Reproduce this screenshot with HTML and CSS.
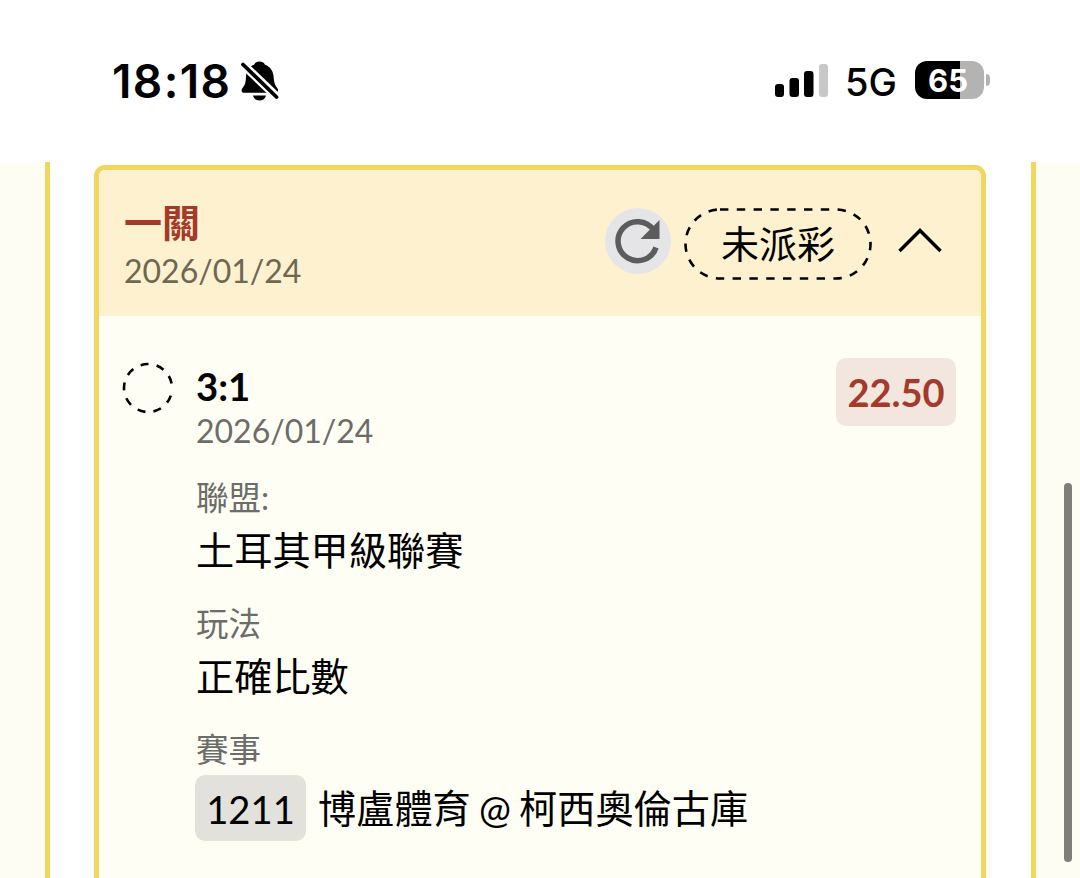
FILE: index.html
```html
<!DOCTYPE html>
<html lang="zh-Hant">
  <head>
    <meta charset="UTF-8" />
    <title>投注紀錄</title>
    <link rel="stylesheet" href="styles.css">
  </head>
  <body>
    <div class="status-bar">
      <span class="time">18:18</span>
      <svg class="bell" width="38" height="42" viewBox="0 0 38 42">
        <path d="M18.500 1.500c2.500 0 4.500 1.200 5.500 3.200 5.200 2 8 6 8.500 11 .5 7 1.300 9 3.500 12 2 2.500 1 5-1.500 5h-31C.7 32.700-.3 30.500 1.500 28c2.500-3 3.300-5.500 3.600-12.300.3-5 2.700-9 7.900-11 1-2 3-3.200 5.500-3.200z" />
        <path d="M12 35.500h13c-.8 3-3 5-6.500 5s-5.700-2-6.500-5z" />
        <path class="bell-gap" d="M1 3.500L37 38" />
        <path class="bell-slash" d="M2 4.500L35.500 37" />
      </svg>
      <svg class="signal" width="54" height="34" viewBox="0 0 54 34">
        <rect x="0" y="20" width="9" height="13" rx="3" />
        <rect x="14.500" y="14" width="9.500" height="19" rx="3" />
        <rect x="29" y="7" width="9.500" height="26" rx="3" />
        <rect class="off" x="44" y="0" width="9" height="33" rx="3" />
      </svg>
      <span class="network">5G</span>
      <span class="battery">65</span>
      <span class="battery-tip"></span>
    </div>

    <div class="page">
      <div class="panel">
        <div class="card">
          <div class="card-header">
            <div class="card-title">
              <h3>一關</h3>
              <p class="date">2026/01/24</p>
            </div>
            <button class="refresh">
              <svg width="66" height="66" viewBox="0 0 66 66">
                <path class="arc" d="M48.500 22A19.500 19.500 0 1 0 51 39.500" />
                <path d="M54.500 12v19H35.500z" />
              </svg>
            </button>
            <span class="status">
              <svg width="188" height="72" viewBox="0 0 188 72">
                <rect x="1.500" y="1.500" width="185" height="69" rx="34.500" />
              </svg>
              未派彩
            </span>
            <svg class="chevron" width="44" height="26" viewBox="0 0 44 26">
              <path d="M1.500 24L22 3.500 42.500 24" />
            </svg>
          </div>

          <div class="bet">
            <svg class="pending" width="52" height="52" viewBox="0 0 52 52">
              <circle cx="26" cy="26" r="24" />
            </svg>
            <div class="bet-info">
              <h4>3:1</h4>
              <p class="date">2026/01/24</p>
              <dl>
                <dt>聯盟:</dt>
                <dd>土耳其甲級聯賽</dd>
                <dt>玩法</dt>
                <dd>正確比數</dd>
                <dt>賽事</dt>
                <dd class="match"><span class="match-no">1211</span>博盧體育 @ 柯西奧倫古庫</dd>
              </dl>
            </div>
            <span class="odds">22.50</span>
          </div>
        </div>
      </div>
      <div class="scrollbar"></div>
    </div>
  </body>
</html>
```
FILE: styles.css
```css
* {
  box-sizing: border-box;
}

body {
  margin: 0;
  height: 878px;
  overflow: hidden;
  background: #fff;
  color: #000;
  font-family: Lato, "Noto Sans CJK TC", sans-serif;
}

h3,
h4,
p,
dl,
dd {
  margin: 0;
}

/* Status bar */
.status-bar {
  display: flex;
  align-items: center;
  height: 162px;
  padding: 0 90px 0 112px;
  font-family: Inter, sans-serif;
}

.time {
  width: 118px;
  font-size: 46px;
  font-weight: 600;
  letter-spacing: 1.4px;
  line-height: 50px;
  white-space: nowrap;
}

.bell {
  margin-left: 11px;
}

.bell-gap {
  stroke: #fff;
  stroke-width: 8.5;
}

.bell-slash {
  stroke: #000;
  stroke-width: 3.8;
  stroke-linecap: round;
}

.signal {
  margin-left: auto;
}

.signal .off {
  fill: #c8c8c8;
}

.network {
  width: 51px;
  margin-left: 16px;
  font-size: 38px;
  font-weight: 500;
  line-height: 44px;
  padding-top: 1px;
  white-space: nowrap;
}

.battery {
  width: 69px;
  height: 38px;
  margin: 0 0 2px 19px;
  border-radius: 12px;
  background: linear-gradient(90deg, #000 65%, #b3b3b3 65%);
  color: #fff;
  font-size: 31px;
  font-weight: 700;
  line-height: 39px;
  text-align: center;
  text-indent: -3px;
}

.battery-tip {
  width: 4px;
  height: 12px;
  margin: 0 0 2px 2px;
  border-radius: 0 6px 6px 0;
  background: #b3b3b3;
}

/* Page */
.page {
  position: relative;
  height: 716px;
  padding: 0 44px 0 45px;
  background: #fdfdf4;
  overflow: hidden;
}

.panel {
  height: 760px;
  padding: 3px 45px 0 44px;
  border: solid #f0d860;
  border-width: 0 5px;
  background: #fff;
}

.card {
  height: 750px;
  border: 5px solid #f0d860;
  border-radius: 11px;
  background: #fefef5;
  overflow: hidden;
}

.card-header {
  display: flex;
  align-items: center;
  height: 146px;
  padding: 0 39px 0 25px;
  background: #fdf1cf;
}

.card-title {
  flex: 1;
  padding-top: 3px;
}

.card-title h3 {
  color: #a33a2a;
  font-size: 38px;
  font-weight: 700;
  line-height: 51px;
}

.date {
  color: #6c6c68;
  font-size: 32px;
  line-height: 44px;
}

.card-title .date {
  padding-top: 1px;
  color: #6e6751;
}

.refresh {
  width: 66px;
  height: 66px;
  margin-bottom: 4px;
  padding: 0;
  border: 0;
  border-radius: 50%;
  background: #e5e5e7;
  fill: #5c5c5c;
}

.refresh svg {
  display: block;
}

.refresh .arc {
  fill: none;
  stroke: #5c5c5c;
  stroke-width: 5.5;
}

.status {
  position: relative;
  width: 188px;
  height: 72px;
  margin: 1px 0 0 13px;
  font-size: 38px;
  line-height: 71px;
  text-align: center;
}

.status svg {
  position: absolute;
  top: 0;
  left: 0;
  fill: none;
  stroke: #000;
  stroke-width: 2.6;
  stroke-dasharray: 8.4 8.4;
}

.chevron {
  margin: 0 0 7px 26px;
  fill: none;
  stroke: #000;
  stroke-width: 3.4;
}

/* Bet */
.bet {
  display: flex;
  align-items: flex-start;
  padding: 42px 25px 0 23px;
}

.pending {
  margin-top: 4px;
  fill: none;
  stroke: #000;
  stroke-width: 2.6;
  stroke-dasharray: 8 8.2;
  stroke-dashoffset: -7.7;
}

.bet-info {
  flex: 1;
  margin-left: 22px;
}

.bet-info h4 {
  padding-top: 5px;
  font-size: 38.3px;
  font-weight: 700;
  line-height: 46px;
}

dl {
  margin-top: -1px;
}

dt {
  padding-top: 21px;
  color: #6c6c68;
  font-size: 32.5px;
  line-height: 50px;
}

dd {
  margin-top: -1px;
  font-size: 38.2px;
  line-height: 56px;
}

.match {
  display: flex;
  align-items: center;
  height: 66px;
  margin-top: 0;
  word-spacing: -1.6px;
  white-space: pre;
}

.match-no {
  width: 111px;
  height: 66px;
  margin: 0 12px 0 -1px;
  border-radius: 10px;
  background: #e2e1dc;
  line-height: 68px;
  text-align: center;
}

.odds {
  width: 120px;
  height: 68px;
  border-radius: 10px;
  background: #f3e6df;
  color: #a33a2a;
  font-size: 38px;
  font-weight: 700;
  line-height: 69px;
  text-align: center;
}

.scrollbar {
  position: absolute;
  top: 321px;
  right: 8px;
  width: 8px;
  height: 379px;
  border-radius: 4px;
  background: #7e7e7a;
}
```
